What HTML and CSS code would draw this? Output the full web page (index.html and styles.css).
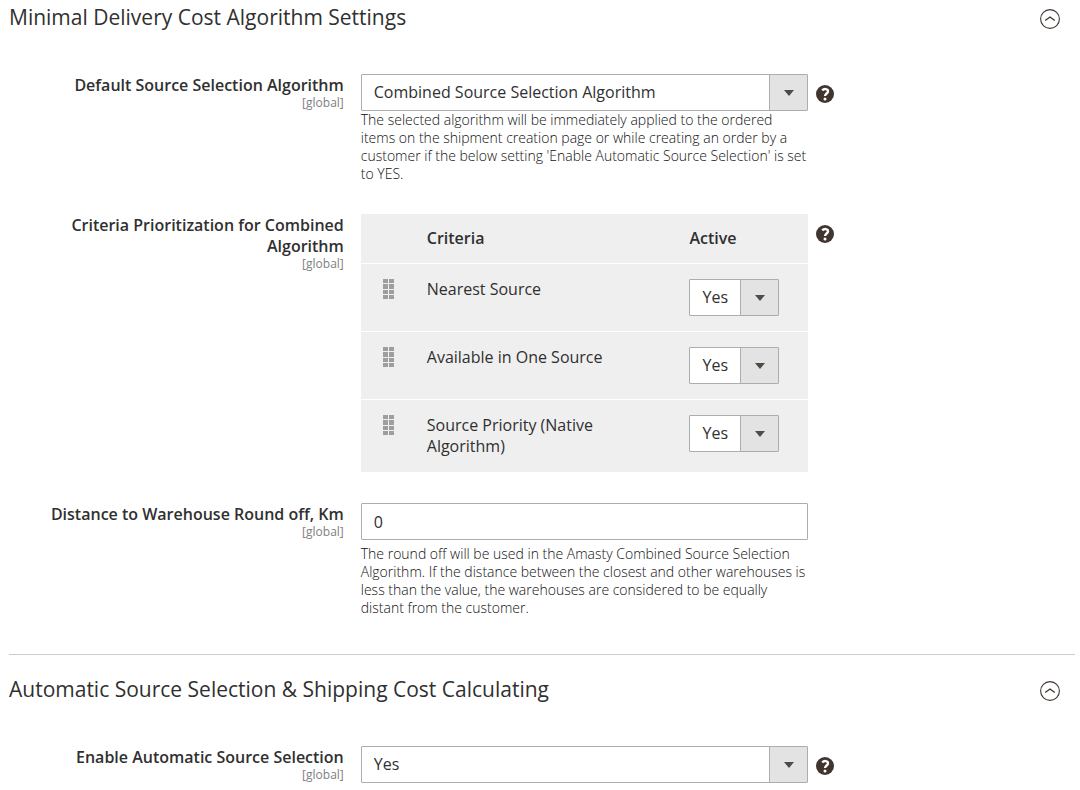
FILE: index.html
```html
<!DOCTYPE html>
<html lang="en">
<head>
  <meta charset="UTF-8" />
  <title>Source Selection Settings</title>
  <link rel="stylesheet" href="styles.css">
</head>
<body>
  <!-- shared icons -->
  <svg class="sprite" aria-hidden="true">
    <symbol id="icon-collapse" viewBox="0 0 20 20">
      <circle cx="10" cy="10" r="9.4" fill="none" stroke="currentColor" stroke-width="1.1" />
      <path d="M5.2 11.6 10 8l4.8 3.6" fill="none" stroke="currentColor" stroke-width="1.3" />
    </symbol>
    <symbol id="icon-help" viewBox="0 0 18 18">
      <circle cx="9" cy="9" r="9" fill="currentColor" />
      <path d="M6.2 5.4C8.2 3.3 12 3.8 12 6.3c0 2.3-2.9 2.2-2.9 4.8" fill="none" stroke="#fff" stroke-width="2.4" />
      <circle cx="9" cy="14" r="1.5" fill="#fff" />
    </symbol>
    <symbol id="icon-drag" viewBox="0 0 11 20">
      <path d="M0 0h5v4H0zM6 0h5v4H6zM0 5h5v5H0zM6 5h5v5H6zM0 11h5v4H0zM6 11h5v4H6zM0 16h5v4H0zM6 16h5v4H6z" fill="currentColor" />
    </symbol>
  </svg>

  <form class="config">
    <section class="section">
      <header class="section-header">
        <h2>Minimal Delivery Cost Algorithm Settings</h2>
        <button type="button" class="collapse" aria-label="Collapse section"><svg><use href="#icon-collapse" /></svg></button>
      </header>

      <div class="fields">
        <div class="field">
          <div class="field-label">
            <label for="algorithm">Default Source Selection Algorithm</label>
            <span class="scope">[global]</span>
          </div>
          <div class="field-control">
            <div class="select">
              <select id="algorithm">
                <option>Combined Source Selection Algorithm</option>
              </select>
            </div>
            <p class="note">The selected algorithm will be immediately applied to the ordered items on the shipment creation page or while creating an order by a customer if the below setting 'Enable Automatic Source Selection' is set to YES.</p>
          </div>
          <button type="button" class="help" aria-label="Help"><svg><use href="#icon-help" /></svg></button>
        </div>

        <div class="field">
          <div class="field-label">
            <span class="label" id="criteria-label">Criteria Prioritization for Combined Algorithm</span>
            <span class="scope">[global]</span>
          </div>
          <div class="field-control">
            <table class="criteria" aria-labelledby="criteria-label">
              <thead>
                <tr>
                  <th class="col-drag"></th>
                  <th>Criteria</th>
                  <th class="col-active">Active</th>
                </tr>
              </thead>
              <tbody>
                <tr>
                  <td class="col-drag"><svg class="drag"><use href="#icon-drag" /></svg></td>
                  <td><label for="nearest">Nearest Source</label></td>
                  <td><div class="select small"><select id="nearest"><option>Yes</option><option>No</option></select></div></td>
                </tr>
                <tr>
                  <td class="col-drag"><svg class="drag"><use href="#icon-drag" /></svg></td>
                  <td><label for="one-source">Available in One Source</label></td>
                  <td><div class="select small"><select id="one-source"><option>Yes</option><option>No</option></select></div></td>
                </tr>
                <tr>
                  <td class="col-drag"><svg class="drag"><use href="#icon-drag" /></svg></td>
                  <td><label for="priority">Source Priority (Native Algorithm)</label></td>
                  <td><div class="select small"><select id="priority"><option>Yes</option><option>No</option></select></div></td>
                </tr>
              </tbody>
            </table>
          </div>
          <button type="button" class="help" aria-label="Help"><svg><use href="#icon-help" /></svg></button>
        </div>

        <div class="field">
          <div class="field-label">
            <label for="distance">Distance to Warehouse Round off, Km</label>
            <span class="scope">[global]</span>
          </div>
          <div class="field-control">
            <input type="text" id="distance" value="0" />
            <p class="note spaced">The round off will be used in the Amasty Combined Source Selection Algorithm. If the distance between the closest and other warehouses is less than the value, the warehouses are considered to be equally distant from the customer.</p>
          </div>
        </div>
      </div>
    </section>

    <section class="section">
      <header class="section-header">
        <h2>Automatic Source Selection &amp; Shipping Cost Calculating</h2>
        <button type="button" class="collapse" aria-label="Collapse section"><svg><use href="#icon-collapse" /></svg></button>
      </header>

      <div class="fields">
        <div class="field">
          <div class="field-label">
            <label for="automatic">Enable Automatic Source Selection</label>
            <span class="scope">[global]</span>
          </div>
          <div class="field-control">
            <div class="select">
              <select id="automatic"><option>Yes</option><option>No</option></select>
            </div>
          </div>
          <button type="button" class="help" aria-label="Help"><svg><use href="#icon-help" /></svg></button>
        </div>
      </div>
    </section>
  </form>
</body>
</html>
```
FILE: styles.css
```css
* {
  box-sizing: border-box;
}

body {
  margin: 0;
  padding: 3px 5px 0 9px;
  background: #fff;
  color: #303030;
  font-family: 'Open Sans', sans-serif;
  font-size: 16px;
  line-height: 21px;
}

button {
  padding: 0;
  border: none;
  background: none;
  color: #41362f;
  cursor: pointer;
}

svg {
  display: block;
}

.sprite {
  display: none;
}

.section + .section {
  margin-top: 37px;
  padding-top: 20px;
  border-top: 1px solid #ccc;
}

.section-header {
  display: flex;
  justify-content: space-between;
  align-items: center;
  padding-right: 15px;
}

h2 {
  margin: 0;
  font-size: 21px;
  font-weight: 400;
  line-height: 28px;
}

.collapse svg {
  width: 20px;
  height: 20px;
  margin-top: 4px;
}

.fields {
  display: flex;
  flex-direction: column;
  gap: 31px;
  margin-top: 43px;
}

.field {
  display: grid;
  grid-template-columns: 33% 42% 25%;
  align-items: start;
}

.field-label {
  padding: 1px 17px 0 24px;
  text-align: right;
}

.field-label label,
.field-label .label {
  display: block;
  font-weight: 600;
}

.scope {
  display: block;
  color: #808080;
  font-size: 12px;
  line-height: 14px;
}

.help {
  margin: 11px 0 0 8px;
  justify-self: start;
}

.help svg {
  width: 18px;
  height: 18px;
}

.select {
  position: relative;
}

.select.small {
  width: 90px;
}

/* dropdown arrow */
.select::after {
  content: '';
  position: absolute;
  top: 16px;
  right: 14px;
  border: 5px solid transparent;
  border-top: 6px solid #514943;
  border-bottom: none;
  pointer-events: none;
}

select,
input {
  display: block;
  width: 100%;
  height: 37px;
  padding: 0 12px;
  border: 1px solid #adadad;
  border-radius: 1px;
  background: #fff;
  color: #303030;
  font: inherit;
}

select {
  appearance: none;
  background: linear-gradient(to left, #e3e3e3 37px, #adadad 37px, #adadad 38px, #fff 38px);
}

.note {
  margin: 0;
  color: #111;
  font-size: 14px;
  font-weight: 300;
  line-height: 18px;
}

.note.spaced {
  margin-top: 5px;
}

.criteria {
  width: 100%;
  table-layout: fixed;
  border-spacing: 0;
  background: #efefef;
}

.criteria th,
.criteria td {
  padding: 15px 16px;
  text-align: left;
  vertical-align: top;
}

.criteria th {
  padding: 14px 16px;
  font-weight: 600;
}

.criteria td {
  border-top: 1px solid #fff;
}

.criteria .col-drag {
  width: 50px;
  padding-left: 22px;
  padding-right: 0;
}

.col-active {
  width: 135px;
}

.drag {
  width: 11px;
  height: 20px;
  color: #9e9e9e;
}
```
